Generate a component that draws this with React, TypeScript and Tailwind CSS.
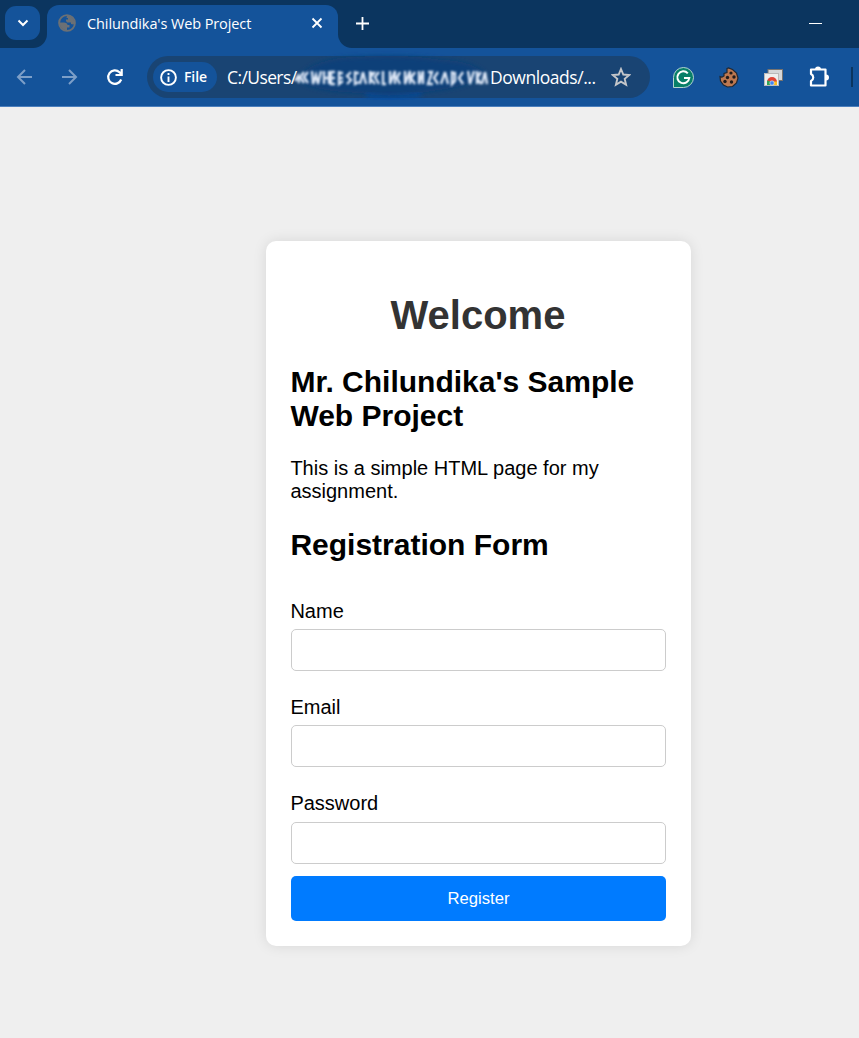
import React from "react";

const chromeFont = "font-['Open_Sans','Noto_Sans',sans-serif]";

function Field({ label, type, className, inputMargin = "mt-[6px]" }: { label: string; type: string; className: string; inputMargin?: string }) {
  return (
    <label className={`block text-[20px] leading-[23px] ${className}`}>
      <span className="-ml-[0.6px] block">{label}</span>
      <input type={type} className={`${inputMargin} block h-[42px] w-full rounded-[5px] border border-[#ccc] bg-white px-3 outline-none`} />
    </label>
  );
}

function Globe() {
  return (
    <svg width="18" height="18" viewBox="0 0 18 18">
      <circle cx="9" cy="9" r="7.9" fill="none" stroke="#6b7075" strokeWidth="1.900" />
      <path d="M1.500 8.500H6c2 0 3.500 1 3.500 2.500h2v2.500H9V16C5 16.500 1.500 13 1.500 8.500ZM9 1.500C13 1.500 16.500 5 16.500 9l-1 1.500-2.500-.5V8.500H9L8 7V5.500h2V4H8.500Z" fill="#6b7075" />
    </svg>
  );
}

const scribble = [
  "M0 11l3-5 1 7M9 2l-4 5 4 6M13 2l-4 5 4 6M17 1l1 13 3-9 2 9 3-13M29 1v13M29 8h5M34 1v13M40 2h-4v12h4M36 8h4M44 1v13l4-3M44 3h4M44 8h4",
  "M56 2l-4 4 4 4-4 4M60 1v13l4-2M60 3h4M68 2l-3 12M68 2l3 12M75 1v13M75 3h4l-4 5 5 6M84 2l-4 5 4 7M88 1v13h3M95 1v13l5-13v13M105 2l-3 6 3 6",
  "M110 1v13l5-13v13M120 2l-4 6 4 6M124 1v13l4-13v13M133 2h4l-4 12h5M143 2l-4 6 4 6M150 2l-4 12M150 2l3 12M157 1v13l3-3V3h-3",
  "M168 2l-4 6 4 6M173 1l2 13 4-13M182 1v13M182 8l4-6M182 8l4 6M190 2l-3 12M190 2l2 12",
];

export default function App() {
  return (
    <div className="flex h-[1038px] w-[859px] flex-col overflow-hidden bg-[#efefef]">
      <header className={`h-[107px] shrink-0 border-b border-[#4b7fbd] bg-[#14539a] text-white ${chromeFont}`}>
        <div className="flex h-12 bg-[#14539a]">
          <div className="flex w-[47px] shrink-0 items-start rounded-br-[14px] bg-[#0b355f] pl-[5px] pt-[6px]">
            <button className="flex h-[34px] w-[35px] items-center justify-center rounded-[11px] bg-[#14539a]">
              <svg width="12" height="8" viewBox="0 0 12 8" fill="none" stroke="white" strokeWidth="2"><path d="M1.500 1.500 6 6l4.500-4.500" /></svg>
            </button>
          </div>
          <div className="w-[291px] shrink-0 bg-[#0b355f] pt-[5px]">
            <div className="flex h-[43px] items-center rounded-t-[12px] bg-[#14539a] pb-[7px] pl-[11px] pr-[15px]">
              <Globe />
              <span className="ml-[11px] whitespace-nowrap pt-px text-[14.500px] tracking-[-0.1px]">Chilundika's Web Project</span>
              <svg className="ml-auto" width="12" height="12" viewBox="0 0 12 12" stroke="white" strokeWidth="1.800"><path d="m1.500 1.500 9 9m0-9-9 9" /></svg>
            </div>
          </div>
          <div className="flex flex-1 items-center rounded-bl-[14px] bg-[#0b355f] pb-[2px] pl-[18px] pr-[37px]">
            <svg width="13" height="13" viewBox="0 0 13 13" stroke="white" strokeWidth="1.800"><path d="M6.500 0v13M0 6.500h13" /></svg>
            <span className="ml-auto h-px w-[13px] bg-white" />
          </div>
        </div>
        <div className="flex h-[58px] items-center pl-[16px]">
          <svg width="17" height="16" viewBox="0 0 17 16" fill="none" stroke="#7d9fc8" strokeWidth="2"><path d="M16 8H2m7-7L2 8l7 7" /></svg>
          <svg className="ml-[28px]" width="17" height="16" viewBox="0 0 17 16" fill="none" stroke="#7d9fc8" strokeWidth="2"><path d="M1 8h14M8 1l7 7-7 7" /></svg>
          <svg className="ml-[28px]" width="18" height="18" viewBox="0 0 18 18" fill="none" stroke="white" strokeWidth="2.200"><path d="M15.200 11.500A6.700 6.700 0 1 1 13.500 4.200L15.500 6.200M15.700 1v6H9.500" /></svg>
          <div className="ml-[23px] flex h-[42px] w-[503px] shrink-0 items-center rounded-full bg-[#194473] pl-[6px]">
            <div className="flex h-[30px] w-[64px] shrink-0 items-center rounded-full bg-[#14539a] pl-[7px]">
              <svg width="17" height="17" viewBox="0 0 17 17" fill="none" stroke="white" strokeWidth="1.900"><circle cx="8.500" cy="8.500" r="7.400" /><path d="M8.500 7.500V13M8.500 4v2" /></svg>
              <span className="ml-[7px] pb-px text-[14px] font-semibold tracking-[-0.1px]">File</span>
            </div>
            <span className="ml-[10px] w-[71px] shrink-0 whitespace-nowrap text-[17.500px] tracking-[-0.6px]">C:/Users/</span>
            <svg className="-ml-[12px] shrink-0" width="204" height="48" viewBox="0 0 204 48" overflow="visible">
              <defs>
                <filter id="soft" x="-10%" y="-50%" width="120%" height="200%"><feGaussianBlur stdDeviation="2.500" /></filter>
                <filter id="ink" x="-5%" y="-30%" width="110%" height="160%"><feGaussianBlur stdDeviation="0.8" /></filter>
              </defs>
              <path d="M14 23Q30 5 70 4Q120 1 155 7Q188 8 200 22Q185 33 145 38Q105 46 75 40Q25 38 14 27Z" fill="#103f79" filter="url(#soft)" />
              <path d="M80 42Q105 48 135 41" fill="none" stroke="#0b4ba5" strokeWidth="3" filter="url(#soft)" />
              <g transform="translate(9 17)" fill="none" stroke="#dce6f5" strokeWidth="2.400" filter="url(#ink)">
                {scribble.map((d) => <path key={d} d={d} />)}
              </g>
            </svg>
            <span className="w-[107px] shrink-0 whitespace-nowrap text-[17.500px] tracking-[-0.450px]">Downloads/...</span>
            <svg className="ml-[14px] shrink-0" width="20" height="20" viewBox="0 0 20 20" fill="none" stroke="#c5c7ca" strokeWidth="1.900"><path d="m10 2 2.300 5.500 6 .5-4.600 3.900 1.400 5.800L10 14.600l-5.100 3.100 1.400-5.800L1.700 8l6-.5Z" /></svg>
          </div>
          <svg className="ml-[23px] shrink-0" width="21" height="21" viewBox="0 0 21 21" fill="none"><path d="M.5 20.500V10.500a10 10 0 1 1 10 10Z" fill="#087f68" stroke="#b5d4d0" /><path d="M14.800 6.300A6 6 0 1 0 16.300 11H11" stroke="white" strokeWidth="2" /></svg>
          <svg className="ml-[25px] shrink-0" width="20" height="21" viewBox="0 0 20 21"><path d="M8 1.500 9.500 1l4 1.500 4 3.500 1.500 5-1.500 5-4 3.500-5 .5-4-2L1.500 14 1 9.500l2 .5 2-1V6.500l3-1Z" fill="#bd7850" stroke="#202833" strokeWidth="1.200" /><g fill="#211b1b"><circle cx="12" cy="6" r="1.600" /><circle cx="8.500" cy="10.500" r="1.700" /><circle cx="15" cy="10" r="1.700" /><circle cx="6" cy="14.500" r="1.700" /><circle cx="12.500" cy="15" r="1.700" /></g></svg>
          <svg className="ml-[25px] shrink-0" width="19" height="17" viewBox="0 0 19 17"><rect x="4" y=".5" width="14.500" height="11" fill="#d5d6d8" stroke="#77736f" /><rect x=".5" y="4.500" width="14" height="12" fill="#eee" stroke="#b9b9b9" /><path d="M3 13a5 5 0 0 1 10 0H8Z" fill="#df4336" /><path d="M3 11.500V16h4l1-3Z" fill="#31a457" /><path d="M9 12.500h4V16H8Z" fill="#f9bd20" /><circle cx="8" cy="14" r="2.200" fill="#4285f4" stroke="#eee" strokeWidth=".6" /></svg>
          <svg className="ml-[25px] shrink-0" width="22" height="22" viewBox="0 0 22 22" fill="none"><path d="M3 3.500h14.500v16H3v-4.500c3-1.500 3-5.500 0-7Z" stroke="white" strokeWidth="2.200" strokeLinejoin="round" /><path d="M7 3.500a3 3 0 0 1 6 0ZM18 8.500a3 3 0 0 1 0 6Z" fill="white" /></svg>
          <span className="ml-[21px] h-5 w-[2px] bg-[#0b355f]" />
        </div>
      </header>
      <main className="flex flex-1 items-start pl-[266px] pt-[134px] font-['Liberation_Sans',Arial,sans-serif] text-black">
        <section className="h-[705px] w-[425px] rounded-[10px] bg-white px-[25px] pt-[51px] shadow-[0_0_14px_rgba(0,0,0,0.1)]">
          <h1 className="-ml-[1px] text-center text-[40px] font-bold leading-[46px] text-[#333]">Welcome</h1>
          <h2 className="-ml-[0.6px] mt-[27px] text-[30px] font-bold leading-[34px]">Mr. Chilundika's Sample Web Project</h2>
          <p className="-ml-[0.6px] mt-[24px] text-[20px] leading-[23px]">This is a simple HTML page for my assignment.</p>
          <h2 className="-ml-[0.6px] mt-[25px] text-[30px] font-bold leading-[34px]">Registration Form</h2>
          <form onSubmit={(e) => e.preventDefault()}>
            <Field label="Name" type="text" className="mt-[38px]" />
            <Field label="Email" type="email" className="mt-[25px]" />
            <Field label="Password" type="password" className="mt-[25px]" inputMargin="mt-[7px]" />
            <button className="mt-[12px] block h-[45px] w-full rounded-[5px] bg-[#007bff] text-[16.67px] text-white">Register</button>
          </form>
        </section>
      </main>
    </div>
  );
}
